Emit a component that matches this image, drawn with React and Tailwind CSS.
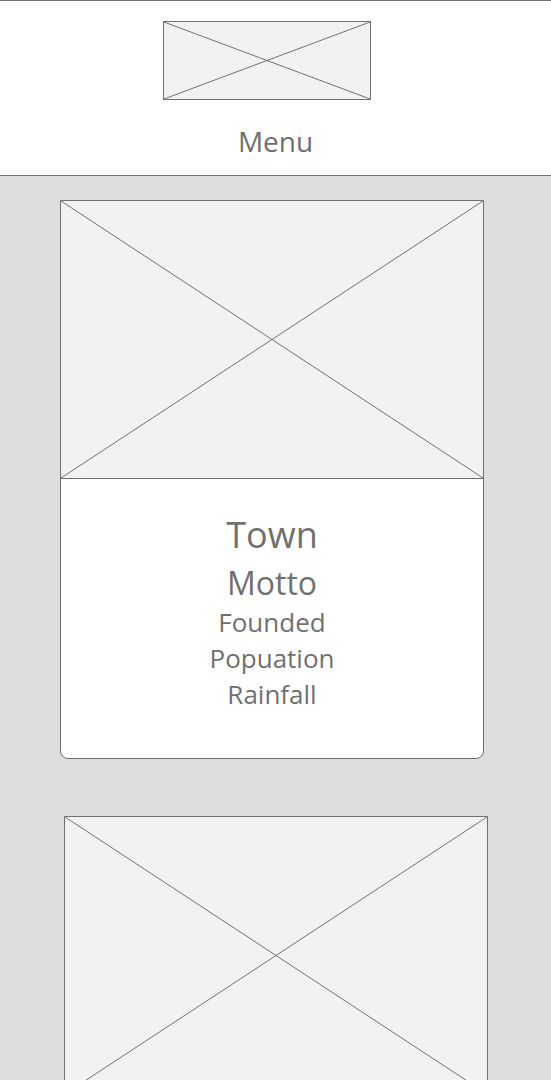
const Placeholder = ({ className }) => (
    <div className={`relative bg-[#f2f2f2] ${className}`}>
        <svg
            className="absolute inset-0 h-full w-full"
            viewBox="0 0 100 100"
            preserveAspectRatio="none"
        >
            <line x1="0" y1="0" x2="100" y2="100" stroke="#707070" strokeWidth="1" vectorEffect="non-scaling-stroke" />
            <line x1="100" y1="0" x2="0" y2="100" stroke="#707070" strokeWidth="1" vectorEffect="non-scaling-stroke" />
        </svg>
    </div>
);

const TownCard = ({ town, className }) => {
    return (
        <div className={`w-[424px] overflow-hidden rounded-b-[8px] border border-[#707070] bg-white ${className}`}>
            <Placeholder className="h-[278px] border-b border-[#707070]" />
            <div className="flex h-[279px] flex-col items-center pt-[33px] text-center text-[#707070]">
                <h2 className="text-[36px] leading-[46px]">{town.name}</h2>
                <p className="mt-[3px] text-[32px] leading-[43px]">{town.motto}</p>
                <p className="text-[26px] leading-[36px]">{town.founded}</p>
                <p className="text-[26px] leading-[36px]">{town.population}</p>
                <p className="text-[26px] leading-[36px]">{town.rainfall}</p>
            </div>
        </div>
    );
};

const towns = [
    { name: "Town", motto: "Motto", founded: "Founded", population: "Popuation", rainfall: "Rainfall" },
    { name: "Town", motto: "Motto", founded: "Founded", population: "Popuation", rainfall: "Rainfall" },
];

export default function App() {
    return (
        <div className="min-h-screen bg-[#dedede] pb-10 font-['Open_Sans',sans-serif]">
            <header className="h-[176px] border-y border-[#707070] bg-white">
                <Placeholder className="ml-[163px] mt-[20px] h-[79px] w-[208px] border border-[#707070]" />
                <nav className="mt-[23px] text-center text-[28px] leading-[36px] text-[#707070]">
                    Menu
                </nav>
            </header>
            <main>
                <TownCard town={towns[0]} className="ml-[60px] mt-[24px]" />
                <TownCard town={towns[1]} className="ml-[64px] mt-[57px]" />
            </main>
        </div>
    );
}
